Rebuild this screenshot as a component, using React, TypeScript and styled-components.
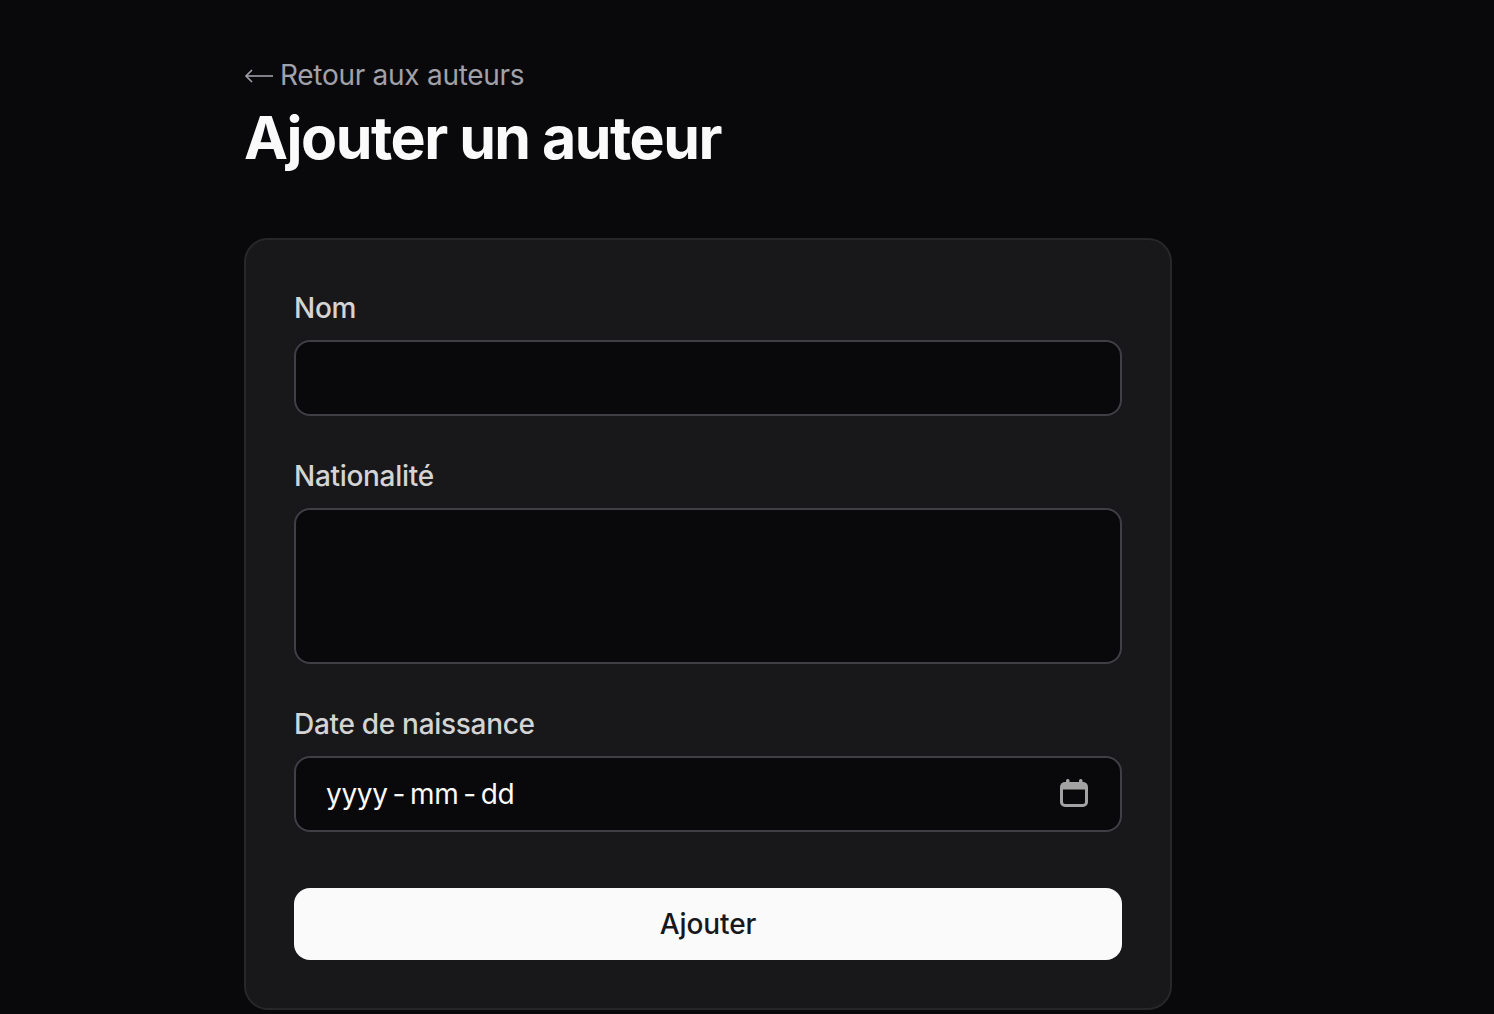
import React from 'react';
import styled, { createGlobalStyle } from 'styled-components';

const GlobalStyle = createGlobalStyle`
  html, body {
    margin: 0;
    background-color: #09090b;
  }
  * {
    box-sizing: border-box;
  }
`;

const Page = styled.main`
  width: 928px;
  margin-left: 244px;
  padding-top: 56px;
  font-family: Inter, 'Liberation Sans', sans-serif;
`;

const BackLink = styled.a`
  display: flex;
  align-items: center;
  gap: 7px;
  font-size: 28px;
  line-height: 38px;
  letter-spacing: -0.28px;
  color: #a1a1aa;
  text-decoration: none;
`;

const ArrowIcon = styled.svg`
  width: 29px;
  height: 16px;
  flex: none;
  margin-top: 2px;
`;

const Title = styled.h1`
  margin: 10px 0 66px;
  font-size: 59px;
  line-height: 68px;
  font-weight: 650;
  letter-spacing: -1.5px;
  color: #fafafa;
`;

const Card = styled.form`
  display: flex;
  flex-direction: column;
  padding: 48px;
  background-color: #18181b;
  border: 2px solid #27272a;
  border-radius: 24px;
`;

const Field = styled.div`
  display: flex;
  flex-direction: column;
  gap: 12px;
  margin-bottom: 40px;
`;

const Label = styled.label`
  font-size: 28px;
  line-height: 40px;
  font-weight: 500;
  letter-spacing: -0.3px;
  color: #d4d4d4;
`;

const Input = styled.input`
  height: 76px;
  padding: 0 32px;
  background-color: #09090b;
  border: 2px solid #3f3f46;
  border-radius: 16px;
  font: inherit;
  color: #fafafa;
  outline: none;
`;

const TextArea = styled.textarea`
  display: block;
  height: 156px;
  padding: 16px 32px;
  background-color: #09090b;
  border: 2px solid #3f3f46;
  border-radius: 16px;
  font: inherit;
  color: #fafafa;
  outline: none;
  resize: none;
`;

const DateBox = styled.div`
  display: flex;
  align-items: center;
  justify-content: space-between;
  height: 76px;
  padding: 0 32px 0 30px;
  background-color: #09090b;
  border: 2px solid #3f3f46;
  border-radius: 16px;
`;

const DateText = styled.span`
  font-size: 28px;
  letter-spacing: -0.3px;
  word-spacing: -2.75px;
  color: #fafafa;
`;

const CalendarIcon = styled.svg`
  width: 28px;
  height: 28px;
  flex: none;
  margin-bottom: 2px;
`;

const SubmitButton = styled.button`
  height: 72px;
  margin-top: 16px;
  background-color: #fafafa;
  border: none;
  border-radius: 16px;
  font-family: inherit;
  font-size: 28px;
  font-weight: 500;
  letter-spacing: -0.1px;
  color: #18181b;
`;

const App: React.FC = () => {
  return (
    <>
      <GlobalStyle />
      <Page>
        <BackLink href='#'>
          <ArrowIcon viewBox='0 0 29 16' fill='none' stroke='#a1a1aa' strokeWidth='1.6'>
            <path d='M2 8H29' />
            <path d='M8 2L2 8L8 14' />
          </ArrowIcon>
          Retour aux auteurs
        </BackLink>
        <Title>Ajouter un auteur</Title>
        <Card>
          <Field>
            <Label>Nom</Label>
            <Input type='text' />
          </Field>
          <Field>
            <Label>Nationalité</Label>
            <TextArea />
          </Field>
          <Field>
            <Label>Date de naissance</Label>
            <DateBox>
              <DateText>yyyy - mm - dd</DateText>
              <CalendarIcon viewBox='0 0 28 28' fill='none'>
                <rect x='6' y='0' width='3.5' height='6' rx='1.5' fill='#a3a3a3' />
                <rect x='19' y='0' width='3.5' height='6' rx='1.5' fill='#a3a3a3' />
                <rect x='1.5' y='4.5' width='25' height='22' rx='3.5' stroke='#a3a3a3' strokeWidth='3' />
                <rect x='1.5' y='4.5' width='25' height='6' fill='#a3a3a3' />
              </CalendarIcon>
            </DateBox>
          </Field>
          <SubmitButton type='button'>Ajouter</SubmitButton>
        </Card>
      </Page>
    </>
  );
};

export default App;
